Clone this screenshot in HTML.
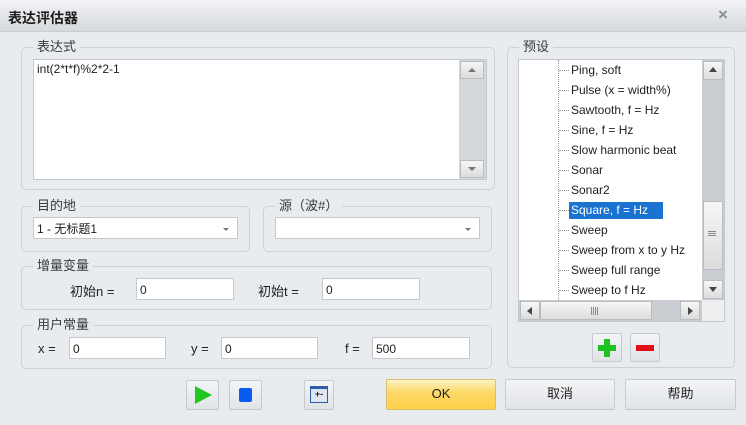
<!DOCTYPE html>
<html><head><meta charset="utf-8"><style>
*{box-sizing:border-box;margin:0;padding:0}
body{width:746px;height:425px;overflow:hidden;background:#e9ecef;font-family:"Liberation Sans","Noto Sans CJK SC",sans-serif;font-size:12px;color:#1e1e1e;position:relative}
.a{position:absolute}
.title{left:0;top:0;width:746px;height:32px;background:linear-gradient(#f2f3f5,#d6d9dd);border-bottom:1px solid #c9ccd0}
.grp{position:absolute;border:1px solid #cdd1d6;border-radius:5px}
.lbl{position:absolute;background:#e9ecef;padding:0 4px;font-size:13px;color:#3a3a3a;line-height:14px}
.inp{position:absolute;background:#fff;border:1px solid #c5c9ce;font-size:12px;padding:4px 3px;line-height:14px}
.arrow{position:absolute;right:8px;top:10px;width:0;height:0;border-left:3px solid transparent;border-right:3px solid transparent;border-top:3px solid #777}
.btn{position:absolute;border:1px solid #c6cace;border-radius:2px;background:linear-gradient(#f3f4f6,#e1e4e7);text-align:center;font-size:13px;line-height:28px}
.sb{position:absolute;background:#c9ccd0}
.sbb{position:absolute;background:linear-gradient(#f6f6f6,#dcdcdc);border:1px solid #b9bcc0}
.it{position:absolute;left:571px;font-size:12px;line-height:16px;height:16px;white-space:nowrap}
.dot{position:absolute;left:559px;width:10px;border-top:1px dotted #999}
</style></head><body>
<div class="a title"></div>
<div class="a" style="left:8px;top:8px;font-weight:bold;font-size:14px">表达评估器</div>
<div class="a" style="left:718px;top:5px;font-size:17px;font-weight:bold;color:#8a8d91">×</div>

<div class="grp" style="left:21px;top:47px;width:474px;height:143px"></div>
<div class="lbl" style="left:33px;top:40px">表达式</div>
<div class="inp" style="left:33px;top:59px;width:454px;height:121px;padding:2px 3px">int(2*t*f)%2*2-1</div>
<div class="sb" style="left:459px;top:60px;width:27px;height:119px;background:#d4d7db"></div>
<div class="sbb" style="left:460px;top:61px;width:24px;height:18px"></div>
<div class="sbb" style="left:460px;top:160px;width:24px;height:18px"></div>
<div class="a" style="left:468px;top:68px;border-left:4px solid transparent;border-right:4px solid transparent;border-bottom:4px solid #777"></div>
<div class="a" style="left:468px;top:167px;border-left:4px solid transparent;border-right:4px solid transparent;border-top:4px solid #777"></div>

<div class="grp" style="left:21px;top:206px;width:229px;height:46px"></div>
<div class="lbl" style="left:33px;top:199px">目的地</div>
<div class="inp" style="left:33px;top:217px;width:205px;height:22px">1 - 无标题1<span class="arrow"></span></div>
<div class="grp" style="left:263px;top:206px;width:229px;height:46px"></div>
<div class="lbl" style="left:275px;top:199px">源（波#）</div>
<div class="inp" style="left:275px;top:217px;width:205px;height:22px"><span class="arrow"></span></div>

<div class="grp" style="left:21px;top:266px;width:471px;height:44px"></div>
<div class="lbl" style="left:33px;top:259px">增量变量</div>
<div class="a" style="left:70px;top:281px;font-size:13px">初始n =</div>
<div class="inp" style="left:136px;top:278px;width:98px;height:22px">0</div>
<div class="a" style="left:258px;top:281px;font-size:13px">初始t =</div>
<div class="inp" style="left:322px;top:278px;width:98px;height:22px">0</div>

<div class="grp" style="left:21px;top:325px;width:471px;height:44px"></div>
<div class="lbl" style="left:33px;top:318px">用户常量</div>
<div class="a" style="left:38px;top:341px;font-size:13px">x =</div>
<div class="inp" style="left:69px;top:337px;width:97px;height:22px">0</div>
<div class="a" style="left:191px;top:341px;font-size:13px">y =</div>
<div class="inp" style="left:221px;top:337px;width:97px;height:22px">0</div>
<div class="a" style="left:345px;top:341px;font-size:13px">f =</div>
<div class="inp" style="left:372px;top:337px;width:98px;height:22px">500</div>

<div class="grp" style="left:507px;top:47px;width:228px;height:321px"></div>
<div class="lbl" style="left:519px;top:40px">预设</div>
<div class="a" style="left:518px;top:59px;width:207px;height:263px;background:#fff;border:1px solid #c5c9ce"></div>
<div class="a" style="left:558px;top:60px;height:240px;border-left:1px dotted #999"></div>
<div class="dot" style="top:70px"></div><div class="it" style="top:62px">Ping, soft</div>
<div class="dot" style="top:90px"></div><div class="it" style="top:82px">Pulse (x = width%)</div>
<div class="dot" style="top:110px"></div><div class="it" style="top:102px">Sawtooth, f = Hz</div>
<div class="dot" style="top:130px"></div><div class="it" style="top:122px">Sine, f = Hz</div>
<div class="dot" style="top:150px"></div><div class="it" style="top:142px">Slow harmonic beat</div>
<div class="dot" style="top:170px"></div><div class="it" style="top:162px">Sonar</div>
<div class="dot" style="top:190px"></div><div class="it" style="top:182px">Sonar2</div>
<div class="dot" style="top:210px"></div><div class="it" style="top:202px;left:569px;padding:0 2px;background:#1a73d0;color:#fff;height:17px;width:94px">Square, f = Hz</div>
<div class="dot" style="top:230px"></div><div class="it" style="top:222px">Sweep</div>
<div class="dot" style="top:250px"></div><div class="it" style="top:242px">Sweep from x to y Hz</div>
<div class="dot" style="top:270px"></div><div class="it" style="top:262px">Sweep full range</div>
<div class="dot" style="top:290px"></div><div class="it" style="top:282px">Sweep to f Hz</div>
<div class="sb" style="left:702px;top:60px;width:22px;height:240px"></div>
<div class="sbb" style="left:703px;top:61px;width:20px;height:19px"></div>
<div class="sbb" style="left:703px;top:201px;width:20px;height:69px"></div>
<div class="a" style="left:708px;top:231px;width:8px;height:5px;border-top:1px solid #888;border-bottom:1px solid #888"></div>
<div class="a" style="left:708px;top:233px;width:8px;border-top:1px solid #888"></div>
<div class="sbb" style="left:703px;top:280px;width:20px;height:19px"></div>
<div class="a" style="left:709px;top:67px;border-left:4px solid transparent;border-right:4px solid transparent;border-bottom:5px solid #444"></div>
<div class="a" style="left:709px;top:287px;border-left:4px solid transparent;border-right:4px solid transparent;border-top:5px solid #444"></div>
<div class="sb" style="left:519px;top:300px;width:183px;height:21px"></div>
<div class="sbb" style="left:520px;top:301px;width:20px;height:19px"></div>
<div class="sbb" style="left:540px;top:301px;width:112px;height:19px"></div>
<div class="a" style="left:591px;top:307px;width:7px;height:8px;border-left:1px solid #888;border-right:1px solid #888"></div>
<div class="a" style="left:593px;top:307px;width:3px;height:8px;border-left:1px solid #888;border-right:1px solid #888"></div>
<div class="sbb" style="left:680px;top:301px;width:20px;height:19px"></div>
<div class="a" style="left:527px;top:307px;border-top:4px solid transparent;border-bottom:4px solid transparent;border-right:5px solid #444"></div>
<div class="a" style="left:688px;top:307px;border-top:4px solid transparent;border-bottom:4px solid transparent;border-left:5px solid #444"></div>
<div class="a" style="left:702px;top:300px;width:22px;height:21px;background:#eceef0"></div>

<div class="btn" style="left:592px;top:333px;width:30px;height:29px"></div>
<div class="a" style="left:598px;top:345px;width:18px;height:6px;background:#1ec21e"></div>
<div class="a" style="left:604px;top:339px;width:6px;height:18px;background:#1ec21e"></div>
<div class="btn" style="left:630px;top:333px;width:30px;height:29px"></div>
<div class="a" style="left:636px;top:345px;width:18px;height:6px;background:#e0101a"></div>

<div class="btn" style="left:186px;top:380px;width:33px;height:30px"></div>
<div class="a" style="left:195px;top:386px;border-top:9px solid transparent;border-bottom:9px solid transparent;border-left:17px solid #22c622"></div>
<div class="btn" style="left:229px;top:380px;width:33px;height:30px"></div>
<div class="a" style="left:239px;top:388px;width:13px;height:14px;background:#0a5cf0;border-radius:2px"></div>
<div class="btn" style="left:304px;top:380px;width:30px;height:30px"></div>
<div class="a" style="left:310px;top:386px;width:18px;height:17px;background:#dfe6f2;border:1px solid #2d5fa8;border-top:3px solid #2d5fa8;font-size:9px;line-height:11px;text-align:center;color:#222;font-weight:bold">+-</div>
<div class="btn" style="left:386px;top:379px;width:110px;height:31px;background:linear-gradient(#fdf3c8,#fcd96a 40%,#ffd04a);border-color:#d9bd6a">OK</div>
<div class="btn" style="left:505px;top:379px;width:110px;height:31px">取消</div>
<div class="btn" style="left:625px;top:379px;width:111px;height:31px">帮助</div>
</body></html>
